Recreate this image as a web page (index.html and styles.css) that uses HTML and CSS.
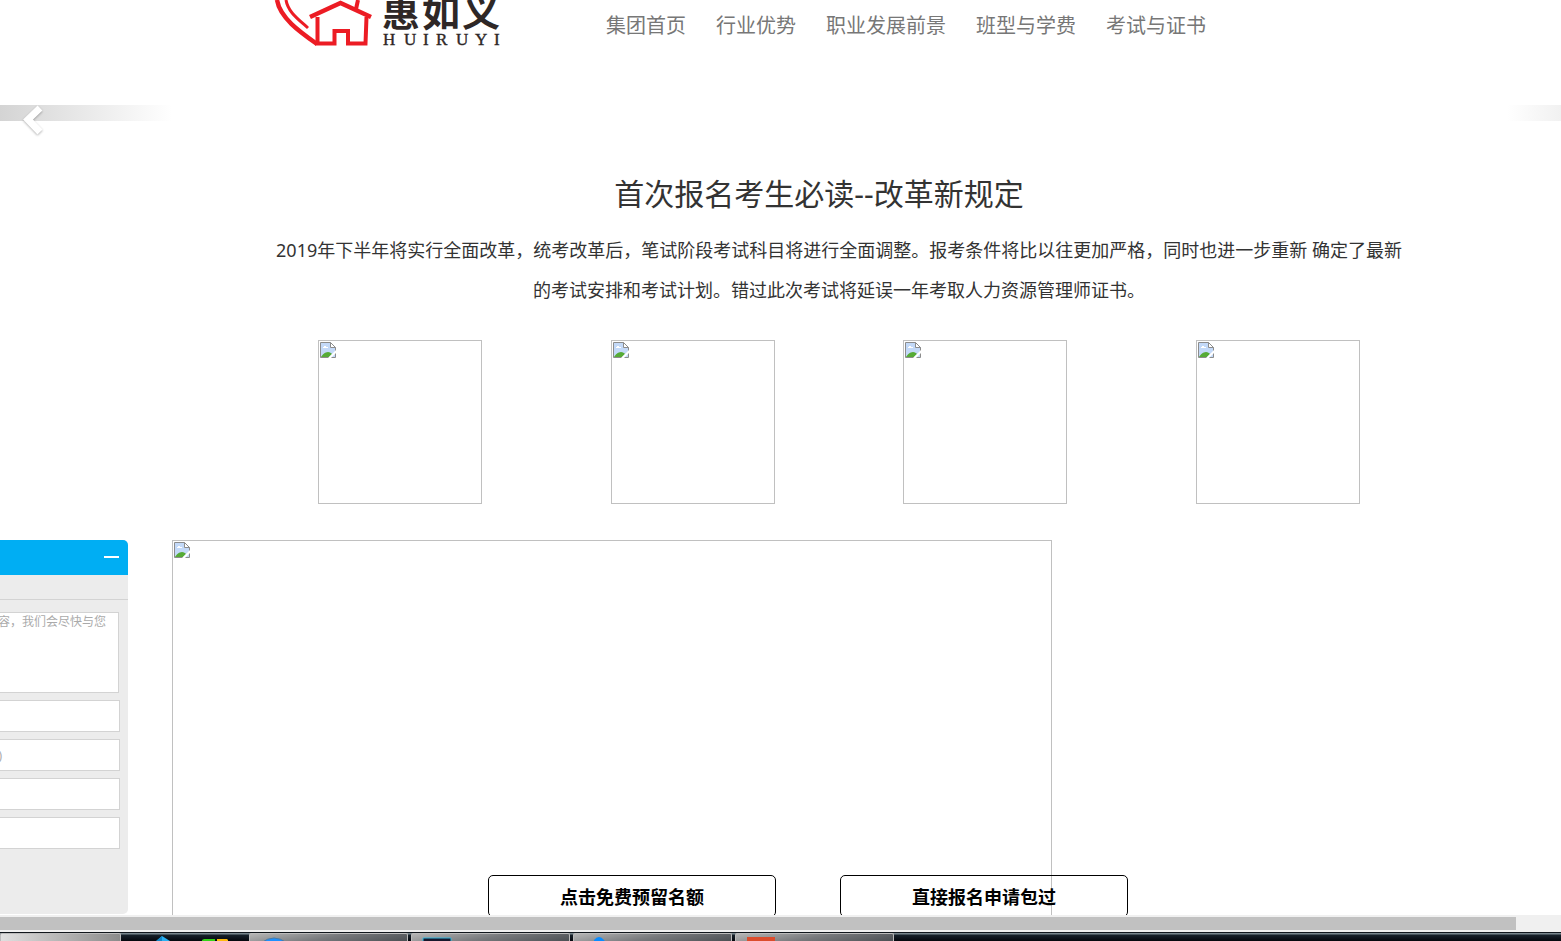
FILE: index.html
```html
<!DOCTYPE html>
<html lang="zh-CN">
<head>
<meta charset="utf-8">
<title>惠如义</title>
<link rel="stylesheet" href="styles.css">
</head>
<body>
<svg class="defs" width="0" height="0" aria-hidden="true">
  <symbol id="broken" viewBox="0 0 16 16">
    <path d="M.5.5h10l5 5v10H.5z" fill="#c3d9f8" stroke="#8c8c8c"/>
    <path d="M10.5.5v5h5z" fill="#fff" stroke="#8c8c8c"/>
    <path d="M3 6V5h1V4h2v1h2v1z" fill="#fff"/>
    <path d="M1 15c1-2 4-5 7-5 2 0 3 1 4 2l-3 3z" fill="#56ab36"/>
    <path d="M8 16l8-8v3l-5 5z" fill="#fff"/>
  </symbol>
</svg>
<div class="viewport">
  <header class="header">
    <a class="logo" href="#" aria-label="惠如义 HUIRUYI">
      <svg width="228" height="48" viewBox="0 0 228 48">
        <g fill="none" stroke="#ec1c24">
          <path d="M3 0C6 18 26 32 43 44" stroke-width="4.5"/>
          <path d="M12 0C14 12 24 19 34 28" stroke-width="3"/>
          <path d="M41 43.5H60.500V31H74V43.500H91.500L92.500 17M43.500 17V43" stroke-width="4"/>
          <path d="M36 17L66.500 3L97 17" stroke-width="4.500"/>
          <path d="M82 9L84 0" stroke-width="4"/>
        </g>
        <text class="logo-name" x="108 148 188" y="26">惠如义</text>
        <text class="logo-latin" x="109 130 149 162 182 201 220" y="45">HUIRUYI</text>
      </svg>
    </a>
    <nav class="nav">
      <a href="#">集团首页</a>
      <a href="#">行业优势</a>
      <a href="#">职业发展前景</a>
      <a href="#">班型与学费</a>
      <a href="#">考试与证书</a>
    </nav>
  </header>
  <div class="carousel">
    <button class="prev" aria-label="上一张">
      <svg width="26" height="32" viewBox="0 0 26 32"><path d="M20 3L8 14.500L20 27" fill="none" stroke="#fff" stroke-width="7"/></svg>
    </button>
    <button class="next" aria-label="下一张"></button>
  </div>
  <main class="main">
    <h1 class="title">首次报名考生必读--改革新规定</h1>
    <p class="intro">2019年下半年将实行全面改革，统考改革后，笔试阶段考试科目将进行全面调整。报考条件将比以往更加严格，同时也进一步重新 确定了最新的考试安排和考试计划。错过此次考试将延误一年考取人力资源管理师证书。</p>
    <div class="thumbs">
      <div class="missing"><svg><use href="#broken"/></svg></div>
      <div class="missing"><svg><use href="#broken"/></svg></div>
      <div class="missing"><svg><use href="#broken"/></svg></div>
      <div class="missing"><svg><use href="#broken"/></svg></div>
    </div>
  </main>
  <div class="missing banner"><svg><use href="#broken"/></svg></div>

  <form class="chat">
    <div class="chat-head"><button type="button" class="minimize" aria-label="最小化"></button></div>
    <div class="chat-sub"></div>
    <div class="chat-body">
      <textarea aria-label="留言" placeholder="请在此输入留言内容，我们会尽快与您联系。（必填）"></textarea>
      <input type="text" aria-label="姓名" placeholder="姓名">
      <input type="tel" aria-label="电话" placeholder="您的电话号码(必填)">
      <input type="email" aria-label="邮箱" placeholder="邮箱">
      <input type="text" aria-label="地址" placeholder="地址">
    </div>
  </form>
  <div class="actions">
    <button>点击免费预留名额</button>
    <button>直接报名申请包过</button>
  </div>
</div>
<div class="scrollbar"><div class="thumb"></div></div>
<footer class="taskbar">
  <div class="task first"></div>
  <div class="pinned">
    <svg width="20" height="7" viewBox="0 0 20 7"><path d="M2 7L9 1L17 6V7z" fill="#2ab0f2"/><path d="M2 7L9 1V7z" fill="#1286c8"/></svg>
    <svg width="28" height="7" viewBox="0 0 28 7"><path d="M1 7V5L3 4H14V7z" fill="#32d416"/><path d="M16 7V4H26L27 5V7z" fill="#ffb90b"/></svg>
  </div>
  <div class="task"><svg width="28" height="7" viewBox="0 0 28 7"><path d="M1 7Q14-3 27 7z" fill="#1e90ff" stroke="#477ba8"/></svg></div>
  <div class="task"><svg width="30" height="7" viewBox="0 0 30 7"><path d="M1 8V2H29V8" fill="#17172c" stroke="#35b6dc"/></svg></div>
  <div class="task"><svg width="30" height="7" viewBox="0 0 30 7"><path d="M10 7V4Q15-2 20 4L22 7z" fill="#0a8cff"/></svg></div>
  <div class="task"><svg width="30" height="7" viewBox="0 0 30 7"><path d="M1 1H29V7H1z" fill="#dc4c2c"/></svg></div>
</footer>
</body>
</html>
```
FILE: styles.css
```css
* { box-sizing: border-box; }
body {
  margin: 0;
  height: 100vh;
  display: flex;
  flex-direction: column;
  overflow: hidden;
  background: #fff;
  color: #333;
  font-family: "Noto Sans", "Noto Sans CJK SC", sans-serif;
}
.defs { position: absolute; }
.viewport {
  position: relative;
  flex: 1;
  min-height: 0;
  overflow: hidden;
}
.header {
  display: flex;
  height: 105px;
  padding-left: 274px;
}
.logo { width: 332px; height: 48px; flex: none; }
.logo svg { display: block; }
.logo-name {
  font: bold 38px "Noto Sans CJK SC", sans-serif;
  fill: #2e2726;
}
.logo-latin {
  font: 17px "Liberation Serif", serif;
  fill: #2e2726;
  stroke: #2e2726;
  stroke-width: .4px;
}
.nav {
  display: flex;
  gap: 30px;
  height: 52px;
  align-items: center;
  white-space: nowrap;
}
.nav a {
  color: #777;
  font-size: 20px;
  line-height: 20px;
  text-decoration: none;
}
.carousel {
  display: flex;
  justify-content: space-between;
  height: 16px;
}
.carousel button {
  height: 16px;
  border: 0;
  padding: 0;
}
.prev {
  width: 172px;
  text-align: left;
  background: linear-gradient(to right, #d4d4d4, #fff);
}
.prev svg {
  display: block;
  margin-left: 20px;
  overflow: visible;
  filter: drop-shadow(0 1px 1px rgba(0, 0, 0, .3));
}
.next {
  width: 54px;
  background: linear-gradient(to right, #fff, #f1f1f1);
}
.main {
  width: 1170px;
  margin: 49px 0 0 254px;
}
.title {
  margin: 0;
  padding-right: 40px;
  font-size: 30px;
  line-height: 48px;
  font-weight: 400;
  text-align: center;
}
.intro {
  margin: 12px 0 30px;
  padding: 0 20px;
  font-size: 18px;
  line-height: 40px;
  text-align: center;
}
.thumbs {
  display: grid;
  grid-template-columns: repeat(4, 1fr);
  justify-items: center;
}
.missing {
  width: 164px;
  height: 164px;
  padding: 1px;
  border: 1px solid #c0c0c0;
}
.missing svg { display: block; width: 16px; height: 16px; }
.banner {
  width: 880px;
  height: 440px;
  margin: 36px 0 0 172px;
}
.chat {
  position: absolute;
  left: -110px;
  bottom: 1px;
  width: 238px;
  height: 374px;
  border-radius: 5px;
  overflow: hidden;
  background: #ececec;
}
.chat-head {
  display: flex;
  justify-content: flex-end;
  height: 35px;
  padding: 16px 9px 0;
  background: #00aef3;
}
.minimize {
  width: 15px;
  height: 2px;
  border: 0;
  padding: 0;
  background: #fff;
}
.chat-sub { height: 25px; border-bottom: 1px solid #d3d3d3; }
.chat-body {
  display: flex;
  flex-direction: column;
  gap: 7px;
  padding: 12px 8px;
}
.chat textarea, .chat input {
  border: 1px solid #d3d3d3;
  border-radius: 0;
  background: #fff;
  font: 12px "Noto Sans", "Noto Sans CJK SC", sans-serif;
}
.chat textarea {
  height: 81px;
  margin-right: 1px;
  padding: 0 3px;
  line-height: 18px;
  resize: none;
  overflow: hidden;
}
.chat input { height: 32px; padding: 0; }
.chat ::placeholder { color: #aaa; opacity: 1; }
.actions {
  position: absolute;
  left: 488px;
  bottom: 0;
  display: flex;
  gap: 64px;
  height: 40px;
}
.actions button {
  width: 288px;
  height: 42px;
  padding: 0;
  border: 1px solid #000;
  border-radius: 5px;
  background: transparent;
  color: #000;
  font: bold 18px "Noto Sans", "Noto Sans CJK SC", sans-serif;
}
.scrollbar {
  flex: none;
  height: 17px;
  padding: 2px 45px 2px 0;
  background: #f0f0f0;
}
.thumb { height: 13px; background: #c1c1c1; }
.taskbar {
  flex: none;
  display: flex;
  gap: 3px;
  height: 9px;
  border-top: 1px solid #10161c;
  background: linear-gradient(#77858c 1px, #17212a 2px, #05070d);
}
.task {
  width: 159px;
  padding: 2px 0 0 10px;
  border: 1px solid #bbb;
  border-bottom: 0;
  border-radius: 2px 2px 0 0;
  background: linear-gradient(170deg, #b5b5b5, #77797c 50%, #4c5054);
}
.task svg { display: block; }
.first {
  width: 121px;
  background: linear-gradient(to right, #e0e0e0, #8b8b8b);
}
.pinned {
  display: flex;
  gap: 28px;
  width: 122px;
  padding: 2px 0 0 29px;
}
```
